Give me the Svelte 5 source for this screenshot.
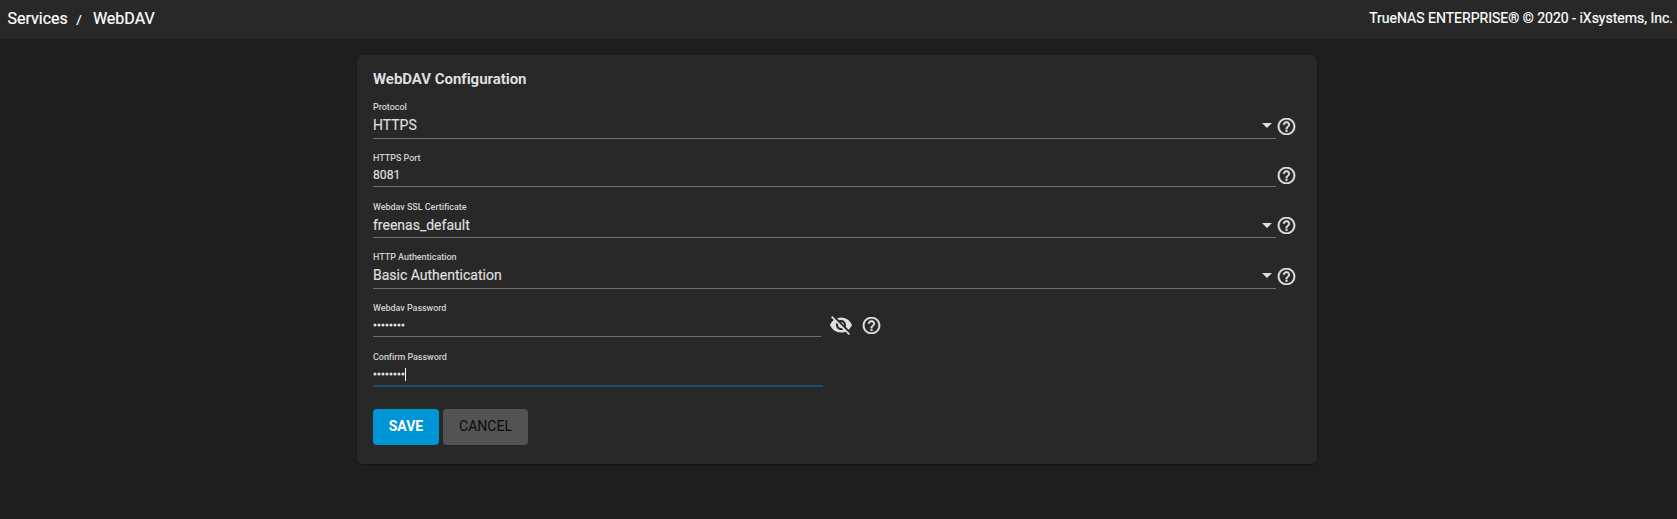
<script>
  const fields = [
    { label: 'Protocol', value: 'HTTPS', kind: 'select', height: 51 },
    { label: 'HTTPS Port', value: '8081', kind: 'input', height: 48 },
    { label: 'Webdav SSL Certificate', value: 'freenas_default', kind: 'select', compact: true, height: 51 },
    { label: 'HTTP Authentication', value: 'Basic Authentication', kind: 'select', height: 51 },
    { label: 'Webdav Password', kind: 'password', height: 48 },
    { label: 'Confirm Password', kind: 'confirm', height: 50 }
  ];
</script>

{#snippet help()}
  <span class="help">
    <svg viewBox="0 0 24 24" width="21" height="21"><path d="M11 18h2v-2h-2v2zm1-16C6.48 2 2 6.48 2 12s4.48 10 10 10 10-4.48 10-10S17.52 2 12 2zm0 18c-4.41 0-8-3.59-8-8s3.59-8 8-8 8 3.59 8 8-3.59 8-8 8zm0-14c-2.21 0-4 1.79-4 4h2c0-1.1.9-2 2-2s2 .9 2 2c0 2-3 1.75-3 5h2c0-2.25 3-2.5 3-5 0-2.21-1.79-4-4-4z" /></svg>
  </span>
{/snippet}

{#snippet dots()}
  <svg class="dots" viewBox="0 0 32 4" width="32" height="4">
    {#each Array(8) as _, i}<circle cx={i * 4 + 2} cy="2" r="1.55" />{/each}
  </svg>
{/snippet}

<div class="page">
  <header>
    <nav><span>Services</span><span class="slash">/</span><span>WebDAV</span></nav>
    <div class="copy">TrueNAS ENTERPRISE® © 2020 - iXsystems, Inc.</div>
  </header>
  <main>
    <h3>WebDAV Configuration</h3>
    {#each fields as f}
      <div class="row {f.kind}" class:compact={f.compact} style:height="{f.height}px">
        <div class="field">
          <div class="label">{f.label}</div>
          <div class="value">
            {#if f.value}<span>{f.value}</span>{:else}{@render dots()}{/if}
            {#if f.kind === 'select'}<i class="arrow"></i>{/if}
            {#if f.kind === 'confirm'}<i class="caret"></i>{/if}
          </div>
        </div>
        {#if f.kind === 'password'}
          <svg class="eye" viewBox="0 0 24 24" width="24" height="24"><path d="M12 7c2.76 0 5 2.24 5 5 0 .65-.13 1.26-.36 1.83l2.92 2.92c1.51-1.26 2.7-2.89 3.43-4.75-1.73-4.39-6-7.5-11-7.5-1.4 0-2.74.25-3.98.7l2.16 2.16C10.74 7.13 11.35 7 12 7zM2 4.27l2.28 2.28.46.46C3.08 8.3 1.78 10.02 1 12c1.73 4.39 6 7.5 11 7.5 1.55 0 3.03-.3 4.38-.84l.42.42L19.73 22 21 20.73 3.27 3 2 4.27zM7.53 9.8l1.55 1.55c-.05.21-.08.43-.08.65 0 1.66 1.34 3 3 3 .22 0 .44-.03.65-.08l1.55 1.55c-.67.33-1.41.53-2.2.53-2.76 0-5-2.24-5-5 0-.79.2-1.53.53-2.2zm4.31-.78l3.15 3.15.02-.16c0-1.66-1.34-3-3-3l-.17.01z" /></svg>
        {/if}
        {#if f.kind !== 'confirm'}{@render help()}{/if}
      </div>
    {/each}
    <div class="actions">
      <button class="save">SAVE</button>
      <button class="cancel">CANCEL</button>
    </div>
  </main>
</div>

<style>
  :global(body) { background: #1e1e1e; }
  .page {
    height: 519px;
    overflow: hidden;
    font-family: Roboto, sans-serif;
    color: #dedede;
    background: #1e1e1e;
  }
  header {
    display: flex;
    justify-content: space-between;
    height: 39px;
    box-sizing: border-box;
    padding: 0 4px 0 7.5px;
    background: #282828;
    color: #fff;
    line-height: 36px;
    -webkit-text-stroke: 0.2px;
  }
  nav { display: flex; font-size: 16px; line-height: 38px; }
  .slash { margin: 0 11px 0 8.5px; font-size: 13.5px; line-height: 38px; }
  .copy { font-size: 14px; }
  main {
    width: 960px;
    height: 409px;
    box-sizing: border-box;
    margin: 16px auto 0 357px;
    padding: 0 16px;
    border-radius: 6px;
    background: #282828;
    box-shadow: 0 1px 2px rgba(0, 0, 0, 0.4);
  }
  h3 {
    margin: 0;
    height: 33px;
    padding-top: 14px;
    box-sizing: border-box;
    font-size: 15px;
    line-height: 20px;
    font-weight: 700;
    letter-spacing: -0.04px;
  }
  .row { display: flex; align-items: flex-end; }
  .field {
    width: 903px;
    height: 38px;
    display: flex;
    flex-direction: column;
    border-bottom: 1px solid #717171;
  }
  .label {
    font-size: 9px;
    line-height: 12px;
    font-weight: 500;
    letter-spacing: -0.04px;
    color: #d0d0d0;
  }
  .value {
    flex: 1;
    display: flex;
    align-items: center;
    font-size: 14px;
    line-height: 18px;
    -webkit-text-stroke: 0.2px;
  }
  .select .field { height: 37px; }
  .select .value { justify-content: space-between; padding-bottom: 1px; }
  .compact .field { height: 36px; }
  .compact .value { padding-bottom: 0; }
  .input .field, .password .field { height: 34px; }
  .input .value { font-size: 12.2px; padding-bottom: 1px; }
  .password .field { width: 448px; }
  .password .value { padding-bottom: 1px; }
  .confirm .field { width: 450px; height: 34px; border-bottom: 2px solid #1a5169; }
  .arrow {
    margin: 0 4px 0 0;
    border: 5px solid transparent;
    border-top-color: #dedede;
    border-bottom: 0;
  }
  .caret { width: 1px; height: 13px; background: #fff; }
  svg { display: block; fill: #dedede; flex: none; }
  .help {
    display: flex;
    align-items: center;
    justify-content: center;
    width: 20px;
    height: 17px;
    margin-bottom: 3px;
    overflow: hidden;
  }
  .help path { stroke: #dedede; stroke-width: 0.35; }
  .select .help { margin-bottom: 4px; }
  .eye { margin: 0 8px 0 8px; }
  .actions { display: flex; gap: 4px; padding-top: 22px; }
  button {
    height: 36px;
    padding: 0 0 1px;
    border: 0;
    border-radius: 4px;
    font: 400 14px/35px Roboto, sans-serif;
  }
  .save { width: 66px; background: #0095d5; color: #fff; font-weight: 700; }
  .cancel { width: 85px; background: #535353; color: #0c0c0c; }
</style>
